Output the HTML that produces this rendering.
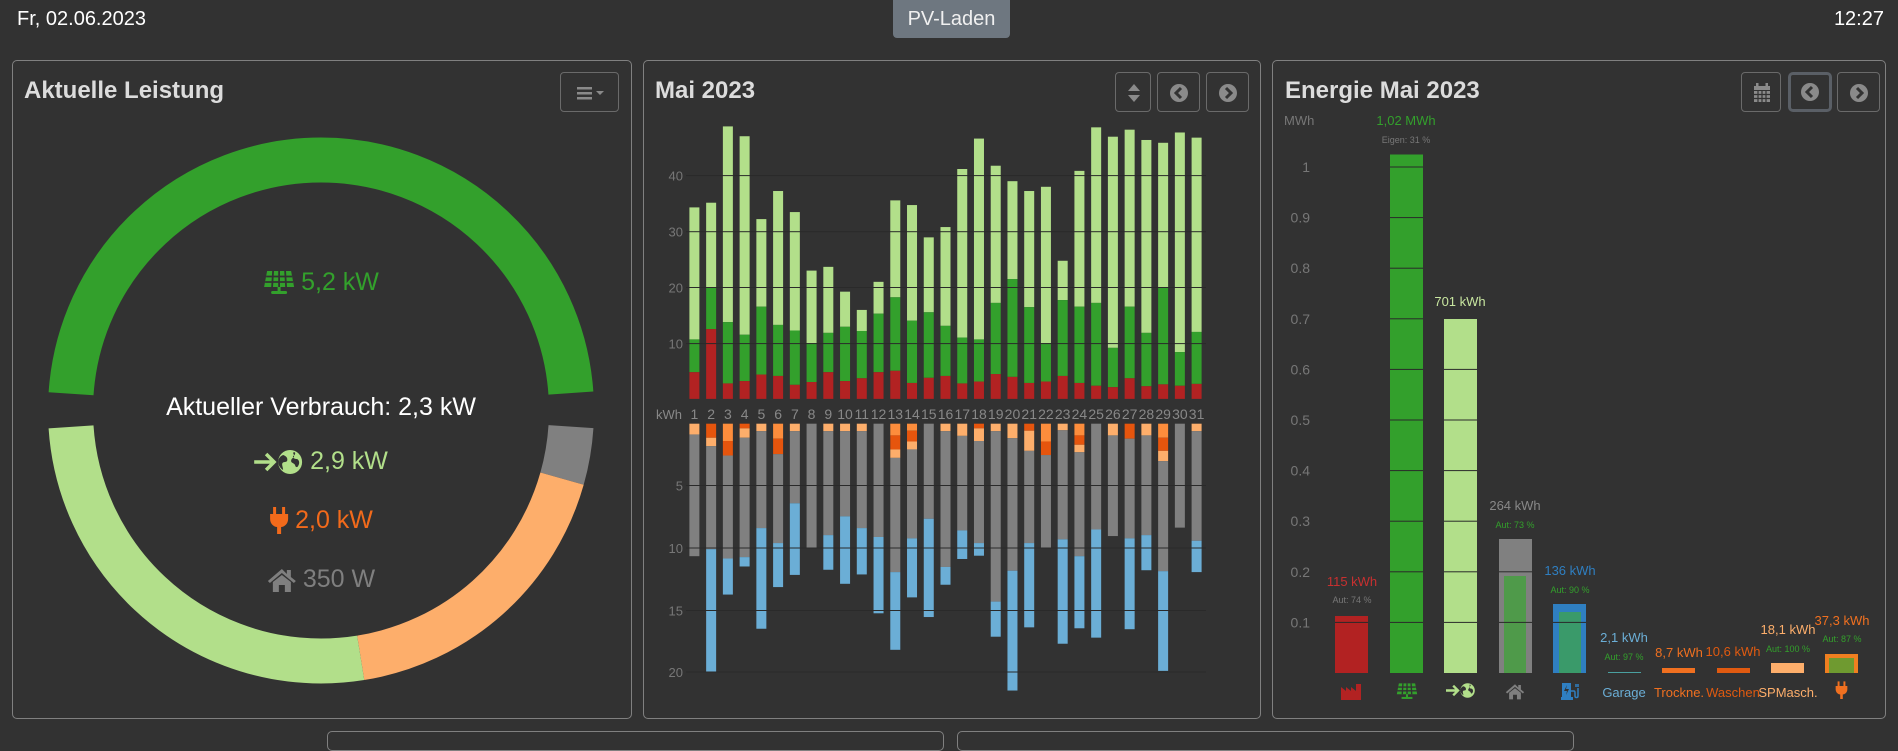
<!DOCTYPE html>
<html><head><meta charset="utf-8">
<style>
*{margin:0;padding:0;box-sizing:border-box}
body{width:1898px;height:734px;background:#323232;font-family:"Liberation Sans",sans-serif;color:#fff;position:relative;overflow:hidden}
.a{position:absolute;white-space:nowrap}
.panel{position:absolute;border:1px solid #808080;border-radius:5px;background:#323232}
.title{position:absolute;font-weight:bold;font-size:24px;color:#dcdcdc;top:16px}
.btn{position:absolute;top:72px;height:40px;border:1px solid #6a6a6a;border-radius:4px}
.c{transform:translateX(-50%);text-align:center}
</style></head><body>
<div class="a" style="left:17px;top:8px;font-size:20px">Fr, 02.06.2023</div>
<div class="a" style="left:893px;top:0;width:117px;height:38px;background:#6e7780;border-radius:0 0 4px 4px;font-size:20px;text-align:center;line-height:38px;color:#f0f0f0">PV-Laden</div>
<div class="a" style="right:14px;top:8px;font-size:20px">12:27</div>

<div class="panel" style="left:12px;top:60px;width:620px;height:659px">
  <div class="title" style="left:11px">Aktuelle Leistung</div>
</div>
<div class="panel" style="left:643px;top:60px;width:618px;height:659px">
  <div class="title" style="left:11px">Mai 2023</div>
</div>
<div class="panel" style="left:1272px;top:60px;width:614px;height:659px">
  <div class="title" style="left:12px">Energie Mai 2023</div>
</div>
<div class="panel" style="left:327px;top:731px;width:617px;height:20px"></div>
<div class="panel" style="left:957px;top:731px;width:617px;height:20px"></div>

<div class="btn" style="left:560px;width:59px"><svg width="59" height="40"><g fill="#8a8a8a"><rect x="16" y="14" width="15" height="2.5"/><rect x="16" y="19" width="15" height="2.5"/><rect x="16" y="24" width="15" height="2.5"/><path d="M35 18h8l-4 4z"/></g></svg></div>
<div class="btn" style="left:1115px;width:36px"><svg width="36" height="40"><g fill="#8a8a8a"><path d="M12 18h12l-6-7z"/><path d="M12 22h12l-6 7z"/></g></svg></div>
<div class="btn" style="left:1157px;width:43px"><svg width="43" height="40"><circle cx="21" cy="20" r="9" fill="#8a8a8a"/><path d="M23 15l-5 5 5 5" stroke="#323232" stroke-width="3" fill="none"/></svg></div>
<div class="btn" style="left:1206px;width:43px"><svg width="43" height="40"><circle cx="21" cy="20" r="9" fill="#8a8a8a"/><path d="M19 15l5 5-5 5" stroke="#323232" stroke-width="3" fill="none"/></svg></div>
<div class="btn" style="left:1741px;width:40px"><svg width="40" height="40"><g fill="#8a8a8a"><rect x="12" y="13" width="16" height="4"/><rect x="14" y="10" width="2.5" height="4"/><rect x="23.5" y="10" width="2.5" height="4"/><rect x="12" y="18" width="16" height="11"/></g><g stroke="#323232" stroke-width="1.2"><path d="M12 21.5h16M12 25.5h16M16 18v11M20 18v11M24 18v11"/></g></svg></div>
<div class="btn" style="left:1788px;width:44px;border:3px solid #5a5f66;border-radius:5px"><svg width="38" height="34"><circle cx="19" cy="17" r="9" fill="#8a8a8a"/><path d="M21 12l-5 5 5 5" stroke="#323232" stroke-width="3" fill="none"/></svg></div>
<div class="btn" style="left:1837px;width:43px"><svg width="43" height="40"><circle cx="21" cy="20" r="9" fill="#8a8a8a"/><path d="M19 15l5 5-5 5" stroke="#323232" stroke-width="3" fill="none"/></svg></div>

<svg class="a" style="left:0;top:0" width="640" height="734">
<g fill="none" stroke-width="45">
<circle cx="321" cy="410.5" r="250.5" pathLength="360" stroke="#808080" stroke-dasharray="12.1 347.9" stroke-dashoffset="-3.7"/>
<circle cx="321" cy="410.5" r="250.5" pathLength="360" stroke="#fdae6b" stroke-dasharray="65.1 294.9" stroke-dashoffset="-15.8"/>
<circle cx="321" cy="410.5" r="250.5" pathLength="360" stroke="#b2df8a" stroke-dasharray="95.4 264.6" stroke-dashoffset="-80.9"/>
<circle cx="321" cy="410.5" r="250.5" pathLength="360" stroke="#33a02c" stroke-dasharray="172.2 187.8" stroke-dashoffset="-183.9"/>
</g>
</svg>
<div class="a c" style="left:321px;top:268px;font-size:25px;color:#33a02c;display:flex;align-items:center;gap:6px">
<svg width="32" height="28" viewBox="0 0 32 28"><path d="M4 2h24l3 16H1z" fill="#33a02c"/><path d="M10 2l-1 16M16 2v16M22 2l1 16M3 7.5h26M2 13h28" stroke="#323232" stroke-width="1.8"/><rect x="14.5" y="18" width="3" height="5" fill="#33a02c"/><rect x="8" y="22" width="16" height="3" rx="1.5" fill="#33a02c"/></svg>5,2 kW</div>
<div class="a c" style="left:321px;top:393px;font-size:25px;color:#fff">Aktueller Verbrauch: 2,3 kW</div>
<div class="a c" style="left:321px;top:447px;font-size:25px;color:#b2df8a;display:flex;align-items:center;gap:6px">
<svg width="50" height="26" viewBox="0 0 50 26"><path d="M0 13h19M12 5l8 8-8 8" stroke="#b2df8a" stroke-width="3.5" fill="none"/><circle cx="36" cy="13" r="12" fill="#b2df8a"/><path d="M29 6c3 1 5 3 4 6-2 2-4 0-5 3 0 2 1 4 1 6-3-2-5-5-5-8 0-3 2-6 5-7zM40 3c2 1 1 3-1 4-1 2 2 3 4 3 2 1 3 4 1 7-1 2-3 1-3-1-1-2-4-2-4-4 0-3 3-3 3-5 0-2-2-3 0-4z" fill="#323232"/></svg>2,9 kW</div>
<div class="a c" style="left:321px;top:506px;font-size:25px;color:#f26a1b;display:flex;align-items:center;gap:6px">
<svg width="20" height="28" viewBox="0 0 20 28"><rect x="4" y="0" width="3" height="8" fill="#f26a1b"/><rect x="13" y="0" width="3" height="8" fill="#f26a1b"/><path d="M1 7h18v5c0 5-4 8-7 8v7h-4v-7c-3 0-7-3-7-8z" fill="#f26a1b"/></svg>2,0 kW</div>
<div class="a c" style="left:321px;top:565px;font-size:25px;color:#7f7f7f;display:flex;align-items:center;gap:6px">
<svg width="30" height="26" viewBox="0 0 30 26"><path d="M15 2L1 14l2 2 12-10 12 10 2-2-5-4V3h-4v4z" fill="#7f7f7f"/><path d="M6 15l9-7 9 7v10h-6v-7h-6v7H6z" fill="#7f7f7f"/></svg>350 W</div>

<svg id="ch" class="a" style="left:0;top:0" width="1898" height="734"></svg>
<script>
var ns="http://www.w3.org/2000/svg",s=document.getElementById("ch");
function R(x,y,w,h,c){var r=document.createElementNS(ns,"rect");r.setAttribute("x",x);r.setAttribute("y",y);r.setAttribute("width",w);r.setAttribute("height",Math.max(h,0));r.setAttribute("fill",c);s.appendChild(r);}
function T(x,y,t,c,fs,anc){var e=document.createElementNS(ns,"text");e.setAttribute("x",x);e.setAttribute("y",y);e.setAttribute("fill",c);e.setAttribute("font-size",fs);e.setAttribute("font-family","Liberation Sans, sans-serif");e.setAttribute("text-anchor",anc||"middle");e.textContent=t;s.appendChild(e);}
var k=2.136;
var up=[[443,725,795],[433,614,703],[270,688,819],[291,715,814],[468,655,800],[408,694,803],[453,706,822],[578,733,816],[570,711,795],[623,698,814],[662,707,808],[602,670,795],[428,635,792],[438,685,818],[507,667,807],[485,696,803],[361,721,819],[296,725,815],[354,647,799],[387,596,805],[408,656,818],[399,733,815],[557,641,803],[365,655,818],[272,647,824],[292,743,827],[277,655,808],[299,711,825],[305,614,821],[283,752,824],[294,709,820]];
var C={L:"#fdae6b",O:"#fd8d3c",D:"#e6550d",G:"#808080",B:"#6baed6"};
var lo=["L928G1188","D935L953G1173B1435","O942D973G1193B1270","D915L935G1190B1210","L921G1128B1343","O937D970G1160B1254","L921G1075B1228","G1170","L921G1143B1217","L921G1103B1247","L921G1128B1227","G1147B1310","O930D960L978G1222B1388","O920D943L960G1150B1276","G1108B1318","L921G1211B1249","L931G1133B1194","D915L942G1160B1187","L921G1285B1360","L936G1219B1475","D920L963G1160B1340","O943D972G1170","L919G1152B1375","O930D950L966G1188B1342","G1131B1362","L930G1145","D937G1150B1344","L930G1143B1218","O935D963L985G1220B1433","G1127","L921G1155B1222"];
for(var i=0;i<31;i++){var x=689.4+i*16.74,u=up[i],b=852/k;
R(x,u[0]/k,10,u[1]/k-u[0]/k,"#b2df8a");R(x,u[1]/k,10,u[2]/k-u[1]/k,"#33a02c");R(x,u[2]/k,10,b-u[2]/k,"#b22222");
var m=lo[i].match(/[A-Z]\d+/g),y0=905/k;for(var j=0;j<m.length;j++){var y1=+m[j].slice(1)/k;R(x,y0,10,y1-y0,C[m[j][0]]);y0=y1;}
T(x+5,419,String(i+1),"#888",14);}
T(669,419,"kWh","#888",13);
[[175.6,"40"],[231.7,"30"],[287.5,"20"],[343.6,"10"],[485.5,"5"],[548,"10"],[610.5,"15"],[672,"20"]].forEach(function(g){R(686,g[0]-0.5,520,1,"#2a2a2a");T(683,g[0]+5,g[1],"#777",13,"end");});
var bars=[[1335,616,"#b22222"],[1390,154.5,"#33a02c"],[1444,319,"#b2df8a"],[1499,539,"#808080"],[1553,604,"#2f7fc1"],[1608,672,"#4aa0a0"],[1662,668,"#f07020"],[1717,668,"#e05a10"],[1771,663,"#fdae6b"],[1825,654,"#f07f20"]];
bars.forEach(function(b){R(b[0],b[1],33,673-b[1],b[2]);});
R(1504,576,22,97,"#4f9a4a");R(1559,612,22,61,"#3a9a6a");R(1829,658,25,15,"#6f9a30");
T(1284,125,"MWh","#777",13,"start");
for(var q=1;q<=10;q++){var yy=673-q*50.6;
bars.forEach(function(b){if(b[1]<yy-1)R(b[0],yy-0.5,33,1,"#2a2a2a");});
T(1310,yy+5,q==10?"1":"0."+q,"#777",14,"end");}
var L=[[1352,586,"115 kWh","#c83030",13],[1352,603,"Aut: 74 %","#777",9],[1406,125,"1,02 MWh","#33a02c",13],[1406,143,"Eigen: 31 %","#777",9],[1460,306,"701 kWh","#c8e6a0",13],[1515,510,"264 kWh","#888",13],[1515,528,"Aut: 73 %","#33a02c",9],[1570,575,"136 kWh","#2f7fc1",13],[1570,593,"Aut: 90 %","#33a02c",9],[1624,642,"2,1 kWh","#6baed6",13],[1624,660,"Aut: 97 %","#33a02c",9],[1679,657,"8,7 kWh","#f07020",13],[1733,656,"10,6 kWh","#e05a10",13],[1788,634,"18,1 kWh","#fdae6b",13],[1788,652,"Aut: 100 %","#33a02c",9],[1842,625,"37,3 kWh","#f07020",13],[1842,642,"Aut: 87 %","#33a02c",9],
[1624,697,"Garage","#6baed6",13],[1679,697,"Trockne.","#f07020",13],[1733,697,"Waschen","#e05a10",13],[1788,697,"SPMasch.","#fdae6b",13]];
L.forEach(function(l){T(l[0],l[1],l[2],l[3],l[4]);});
</script>
<svg class="a" style="left:1340px;top:683px" width="24" height="18"><path d="M1 17V4l5 4V4l5 4V4l5 4V1h5v16z" fill="#b22222"/></svg>
<svg class="a" style="left:1396px;top:682px" width="22" height="19" viewBox="0 0 32 28"><path d="M4 2h24l3 16H1z" fill="#33a02c"/><path d="M10 2l-1 16M16 2v16M22 2l1 16M3 7.5h26M2 13h28" stroke="#323232" stroke-width="2"/><rect x="14.5" y="18" width="3" height="5" fill="#33a02c"/><rect x="8" y="22" width="16" height="3" fill="#33a02c"/></svg>
<svg class="a" style="left:1446px;top:682px" width="30" height="17" viewBox="0 0 50 26"><path d="M0 13h19M12 5l8 8-8 8" stroke="#b2df8a" stroke-width="4" fill="none"/><circle cx="36" cy="13" r="12" fill="#b2df8a"/><path d="M29 6c3 1 5 3 4 6-2 2-4 0-5 3 0 2 1 4 1 6-3-2-5-5-5-8 0-3 2-6 5-7zM40 3c2 1 1 3-1 4-1 2 2 3 4 3 2 1 3 4 1 7-1 2-3 1-3-1-1-2-4-2-4-4 0-3 3-3 3-5 0-2-2-3 0-4z" fill="#323232"/></svg>
<svg class="a" style="left:1505px;top:683px" width="20" height="17" viewBox="0 0 30 26"><path d="M15 2L1 14l2 2 12-10 12 10 2-2-5-4V3h-4v4z" fill="#7f7f7f"/><path d="M6 15l9-7 9 7v10h-6v-7h-6v7H6z" fill="#7f7f7f"/></svg>
<svg class="a" style="left:1561px;top:682px" width="18" height="19"><rect x="1" y="1" width="9" height="14" fill="#2f7fc1"/><rect x="0" y="15" width="12" height="3" fill="#2f7fc1"/><path d="M6 3l-3 6h3l-1 4 3-6H5z" fill="#323232"/><path d="M10 9h3c1 0 1 1 1 2v3c0 2 3 2 3 0V6M15 2v3M17 2v3" stroke="#2f7fc1" stroke-width="1.5" fill="none"/></svg>
<svg class="a" style="left:1835px;top:681px" width="13" height="19" viewBox="0 0 20 28"><rect x="4" y="0" width="3" height="8" fill="#f07020"/><rect x="13" y="0" width="3" height="8" fill="#f07020"/><path d="M1 7h18v5c0 5-4 8-7 8v7h-4v-7c-3 0-7-3-7-8z" fill="#f07020"/></svg>
</body></html>
